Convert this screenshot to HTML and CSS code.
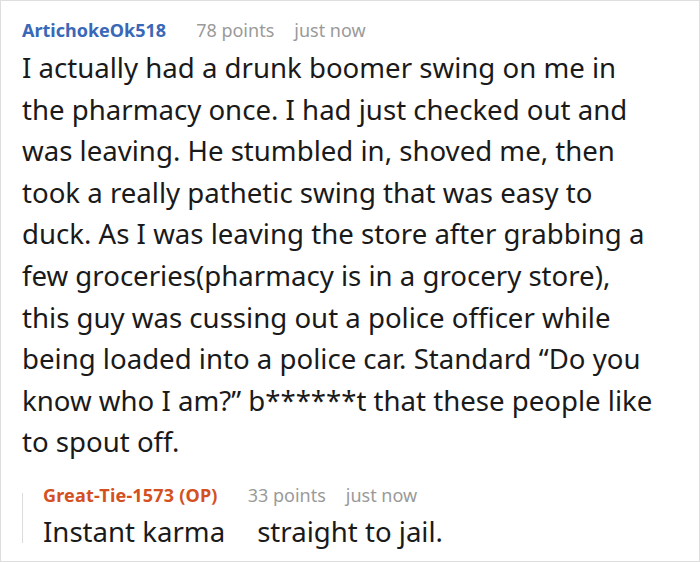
FILE: index.html
```html
<!DOCTYPE html>
<html>
<head>
<meta charset="utf-8">
<link rel="stylesheet" href="styles.css">
</head>
<body>
<div class="card">
  <div class="meta">
    <span class="user">ArtichokeOk518</span>
    <span class="info">78 points</span>
    <span class="info">just now</span>
  </div>
  <p class="body">I actually had a drunk boomer swing on me in the pharmacy once. I had just checked out and was leaving. He stumbled in, shoved me, then took a really pathetic swing that was easy to duck. As I was leaving the store after grabbing a few groceries(pharmacy is in a grocery store), this guy was cussing out a police officer while being loaded into a police car. Standard “Do you know who I am?” b******t that these people like to spout off.</p>
  <div class="reply">
    <div class="rail"></div>
    <div class="reply-content">
      <div class="meta">
        <span class="user op">Great-Tie-1573 (OP)</span>
        <span class="info">33 points</span>
        <span class="info">just now</span>
      </div>
      <p class="body">Instant karma<span class="emoji"></span>straight to jail.</p>
    </div>
  </div>
</div>
</body>
</html>
```
FILE: styles.css
```css
html, body {
  margin: 0;
  padding: 0;
  background: #fff;
}
.card {
  box-sizing: border-box;
  width: 700px;
  height: 562px;
  border: 1px solid #dedede;
  padding: 17px 39px 0 21px;
  font-family: "Noto Sans", sans-serif;
  color: #1a1a1a;
}
.meta {
  display: flex;
  gap: 20px;
  font-size: 18px;
  line-height: 24px;
}
.user {
  font-weight: bold;
  color: #3a68b8;
  margin-right: 10px;
}
.user.op {
  color: #d4501f;
  letter-spacing: 0.2px;
}
.info {
  color: #9a9a9a;
}
.body {
  margin: 5px 0 0;
  font-size: 27.6px;
  line-height: 41.6px;
}
.reply {
  display: flex;
  margin-top: 20px;
}
.rail {
  width: 1px;
  background: #dcdcdc;
  margin: 10px 20px 10px 0;
}
.reply .body {
  margin-top: 4px;
}
.emoji {
  display: inline-block;
  width: 32px;
}
```
